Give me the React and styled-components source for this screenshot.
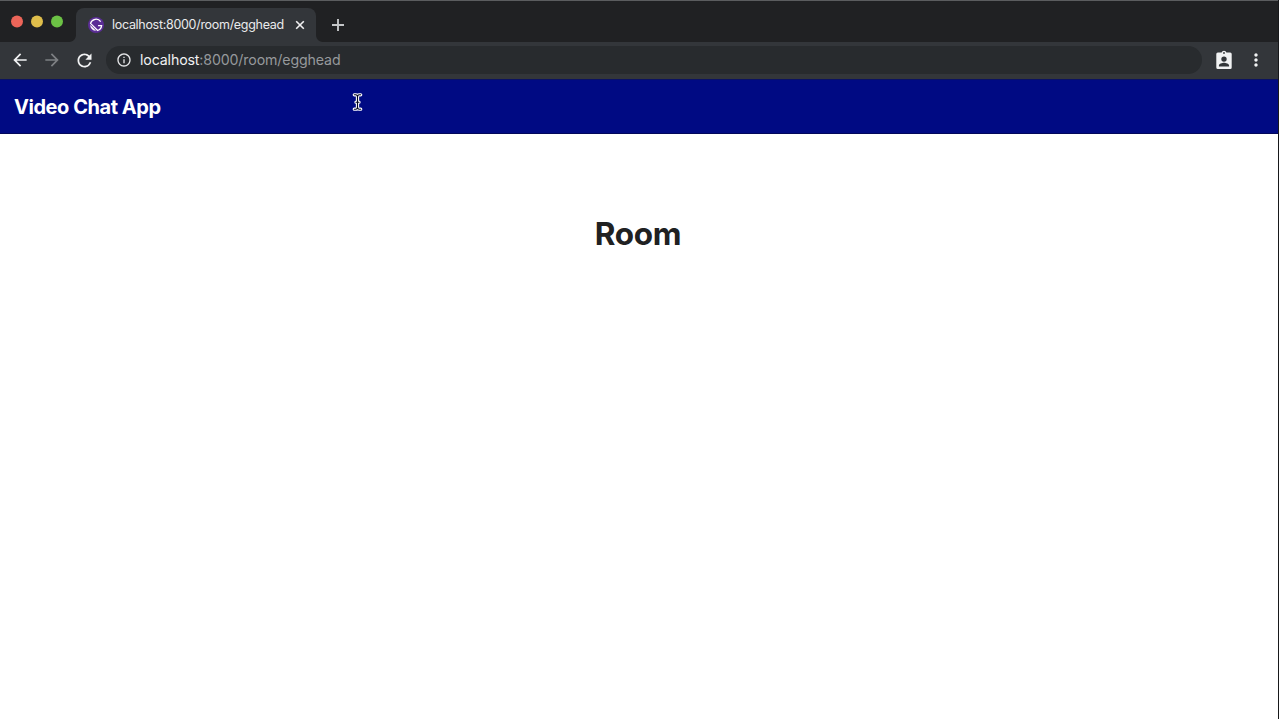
import React from 'react';
import styled, { createGlobalStyle } from 'styled-components';
import { MdArrowBack, MdArrowForward, MdRefresh, MdMoreVert, MdInfoOutline } from 'react-icons/md';

const GlobalStyle = createGlobalStyle`
  * { box-sizing: border-box; }
  body {
    margin: 0;
    overflow: hidden;
    background: #fff;
    font-family: Inter, 'Liberation Sans', sans-serif;
  }
`;

const Window = styled.div`
  position: relative;
  display: flex;
  flex-direction: column;
  height: 100vh;
  background: #fff;
  border-right: 1px solid #17181a;
`;

const TabStrip = styled.div`
  display: flex;
  align-items: flex-end;
  height: 42px;
  flex: none;
  background: #202123;
  border-top: 1px solid #5b5d5f;
`;

const TrafficLights = styled.div`
  display: flex;
  gap: 8px;
  width: 76px;
  height: 41px;
  padding: 14px 0 0 11px;
`;

const Light = styled.span`
  width: 12px;
  height: 12px;
  border-radius: 50%;
  background: ${({ $color }) => $color};
  transform: translateY(0.5px);
`;

const Tab = styled.div`
  position: relative;
  display: flex;
  align-items: center;
  width: 240px;
  height: 34px;
  padding: 0 9px 0 12px;
  border-radius: 8px 8px 0 0;
  background: #33363a;
  color: #e9eaec;

  &::before,
  &::after {
    content: '';
    position: absolute;
    bottom: 0;
    width: 7px;
    height: 7px;
  }
  &::before {
    left: -7px;
    background: radial-gradient(circle at 0 0, transparent 6.5px, #33363a 7.5px);
  }
  &::after {
    right: -7px;
    background: radial-gradient(circle at 100% 0, transparent 6.5px, #33363a 7.5px);
  }
`;

const TabTitle = styled.span`
  flex: 1;
  margin-left: 8px;
  font-size: 12.5px;
  line-height: 16px;
  letter-spacing: -0.3px;
  white-space: nowrap;
`;

const TabButton = styled.span`
  display: flex;
  align-items: center;
  justify-content: center;
  width: 14px;
  height: 14px;
  color: #f1f1f2;
`;

const NewTab = styled.span`
  display: flex;
  align-items: center;
  justify-content: center;
  width: 28px;
  height: 34px;
  margin-left: 8px;
  color: #c4c6c8;
`;

const Toolbar = styled.div`
  display: flex;
  align-items: center;
  height: 37px;
  flex: none;
  padding: 0 6px 1px 4px;
  background: #33363a;
`;

const ToolButton = styled.span`
  display: flex;
  align-items: center;
  justify-content: center;
  width: 32px;
  height: 28px;
  color: ${({ $muted }) => ($muted ? '#7e8184' : '#f1f2f3')};
`;

const Omnibox = styled.div`
  display: flex;
  align-items: center;
  flex: 1;
  height: 28px;
  margin: 0 6px 0 6px;
  padding-left: 10px;
  border-radius: 14px;
  background: #282b2e;
  color: #e4e5e7;
`;

const Address = styled.span`
  margin-left: 8px;
  font-size: 14.2px;
  line-height: 20px;
  letter-spacing: -0.14px;
  color: #96999c;
  white-space: nowrap;
`;

const Host = styled.span`
  color: #f0f1f2;
`;

const AppHeader = styled.header`
  display: flex;
  align-items: center;
  height: 55px;
  flex: none;
  padding: 0 14px 0;
  background: #000a83;
  border-top: 1px solid #0b1260;
  border-bottom: 1px solid #02075a;
`;

const Brand = styled.div`
  color: #fff;
  font-size: 20px;
  font-weight: 700;
  line-height: 24px;
  letter-spacing: -0.45px;
`;

const Main = styled.main`
  flex: 1;
  padding: 80px 2px 0 0;
  text-align: center;
`;

const RoomTitle = styled.h1`
  margin: 0;
  color: #202122;
  font-size: 31.5px;
  font-weight: 700;
  line-height: 40px;
  letter-spacing: -0.25px;
`;

const Pointer = styled.svg`
  position: absolute;
  left: 352px;
  top: 93px;
`;

function GatsbyIcon() {
  return (
    <svg width="16" height="16" viewBox="0 0 28 28">
      <circle cx="14" cy="14" r="14" fill="#5b2d96" />
      <g fill="none" stroke="#fff" strokeWidth="2.2">
        <path d="M22.2 8.2A10 10 0 0 0 4.4 11.2L16.8 23.6A10 10 0 0 0 23.8 15.2H17.6" />
        <path d="M4.2 14.6A9.6 9.6 0 0 0 13.4 23.8Z" fill="#fff" strokeWidth="0.6" />
      </g>
    </svg>
  );
}

function CloseIcon() {
  return (
    <svg width="14" height="14" viewBox="0 0 14 14" stroke="currentColor" strokeWidth="1.6">
      <path d="M3.2 3.2L10.8 10.8M10.8 3.2L3.2 10.8" />
    </svg>
  );
}

function PlusIcon() {
  return (
    <svg width="14" height="14" viewBox="0 0 14 14" stroke="currentColor" strokeWidth="1.9">
      <path d="M7 1V13M1 7H13" />
    </svg>
  );
}

function BadgeIcon() {
  return (
    <svg width="16" height="20" viewBox="0 0 16 20">
      <path
        fill="#f1f2f3"
        fillRule="evenodd"
        d="M1.8 2.5H5.6A2.5 2.5 0 0 1 10.4 2.5H14.2Q15.7 2.5 15.7 4V17.6Q15.7 19.1 14.2 19.1H1.8Q.3 19.1 .3 17.6V4Q.3 2.5 1.8 2.5ZM8 2.1A.9.9 0 1 0 8 3.9A.9.9 0 1 0 8 2.1ZM8 6.4A2.7 2.7 0 1 0 8 11.8A2.7 2.7 0 1 0 8 6.4ZM2.9 16.4H13.1V15.6C13.1 13.8 9.7 12.8 8 12.8S2.9 13.8 2.9 15.6Z"
      />
    </svg>
  );
}

function TextPointer() {
  const shape = 'M2.3 1.8H3.8Q5.5 1.8 5.5 4Q5.5 1.8 7.2 1.8H8.7M5.5 4V14M4 9.2H7M2.3 16.2H3.8Q5.5 16.2 5.5 14Q5.5 16.2 7.2 16.2H8.7';
  return (
    <Pointer width="11" height="18" viewBox="0 0 11 18" fill="none" strokeLinecap="round">
      <path d={shape} stroke="#fff" strokeWidth="3.3" />
      <path d={shape} stroke="#05081f" strokeWidth="1.1" />
    </Pointer>
  );
}

export default function App() {
  return (
    <>
      <GlobalStyle />
      <Window>
        <TabStrip>
          <TrafficLights>
            <Light $color="#ec6559" />
            <Light $color="#dfbe4b" />
            <Light $color="#6cc245" />
          </TrafficLights>
          <Tab>
            <GatsbyIcon />
            <TabTitle>localhost:8000/room/egghead</TabTitle>
            <TabButton><CloseIcon /></TabButton>
          </Tab>
          <NewTab><PlusIcon /></NewTab>
        </TabStrip>
        <Toolbar>
          <ToolButton><MdArrowBack size={20} /></ToolButton>
          <ToolButton $muted><MdArrowForward size={20} /></ToolButton>
          <ToolButton><MdRefresh size={21} /></ToolButton>
          <Omnibox>
            <MdInfoOutline size={16} />
            <Address><Host>localhost</Host>:8000/room/egghead</Address>
          </Omnibox>
          <ToolButton><BadgeIcon /></ToolButton>
          <ToolButton><MdMoreVert size={20} /></ToolButton>
        </Toolbar>
        <AppHeader>
          <Brand>Video Chat App</Brand>
        </AppHeader>
        <Main>
          <RoomTitle>Room</RoomTitle>
        </Main>
        <TextPointer />
      </Window>
    </>
  );
}
